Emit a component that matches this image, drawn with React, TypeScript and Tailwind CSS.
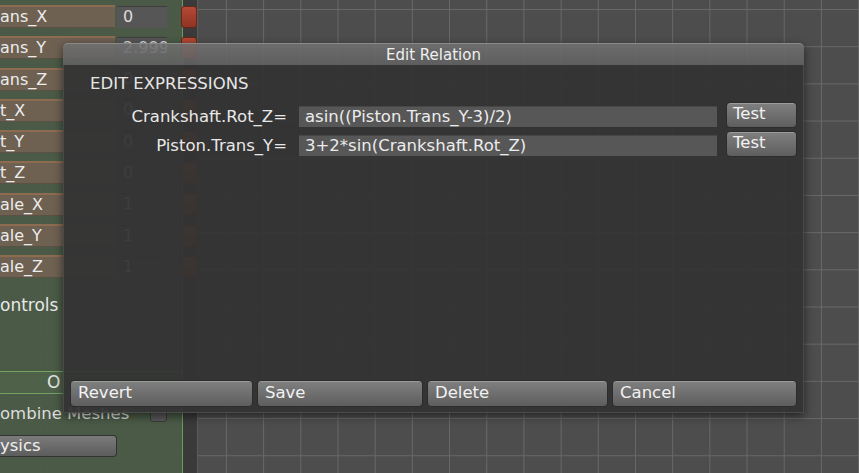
import React from 'react';

const fields = [
  { name: 'ans_X', value: '0' },
  { name: 'ans_Y', value: '2.999' },
  { name: 'ans_Z', value: '0' },
  { name: 't_X', value: '0' },
  { name: 't_Y', value: '0' },
  { name: 't_Z', value: '0' },
  { name: 'ale_X', value: '1' },
  { name: 'ale_Y', value: '1' },
  { name: 'ale_Z', value: '1' },
];

const expressions = [
  { label: 'Crankshaft.Rot_Z=', expr: 'asin((Piston.Trans_Y-3)/2)' },
  { label: 'Piston.Trans_Y=', expr: '3+2*sin(Crankshaft.Rot_Z)' },
];

const btn =
  'rounded-[4px] border border-[#2c2c2c] bg-gradient-to-b from-[#808080] to-[#5e5e5e] shadow-[inset_0_1px_0_rgba(255,255,255,0.22)] text-left text-[#f2f2f2] text-[16.5px]';

const App: React.FC = () => {
  return (
    <div className="relative w-[859px] h-[473px] overflow-hidden flex font-['DejaVu_Sans',sans-serif] bg-[#4d4d4d] bg-[linear-gradient(to_right,#686868_1px,transparent_1px),linear-gradient(to_bottom,#686868_1px,transparent_1px)] bg-[size:37.2px_37.2px] bg-[position:2.8px_9px]">
      {/* inspector panel */}
      <div className="w-[197px] h-full flex flex-col bg-[linear-gradient(to_right,rgba(74,91,70,0.94)_182px,#6a9d5a_182px,#6a9d5a_183px,#3a3a3a_183px)]">
        <div className="pt-[5px] flex flex-col gap-[8.3px]">
          {fields.map((f) => (
            <div key={f.name} className="h-[23px] flex items-center">
              <div className="w-[115px] h-full bg-[#6e6152] border-t-2 border-[#8d6b50] border-b border-b-[#5b5044] text-[16px] leading-[20px] text-[#ececec] overflow-hidden whitespace-nowrap">
                {f.name}
              </div>
              <div className="ml-[2px] w-[50px] h-[22px] bg-[#565656] border-t border-[#3e3e3e] px-[6px] text-[16px] leading-[20px] text-[#dcdcdc] overflow-hidden whitespace-nowrap">
                {f.value}
              </div>
              <div className="ml-[14px] w-[16px] h-[22px] rounded-[3px] bg-gradient-to-b from-[#b34a35] to-[#8f3424] border border-[#6a2418]" />
            </div>
          ))}
        </div>
        <div className="mt-[16px] h-[22px] leading-[22px] text-[17px] text-[#e8e8e8] w-[182px] whitespace-nowrap overflow-hidden">
          ontrols
        </div>
        <div className="mt-[55px] w-[182px] h-[23px] border-y border-[#73a363] bg-[#4f6249] pl-[47px] leading-[21px] text-[17px] text-[#e4e4e4]">
          O
        </div>
        <div className="mt-[9px] w-[182px] h-[22px] flex items-center">
          <span className="text-[16.5px] leading-[22px] text-[#dedede] whitespace-nowrap">ombine Meshes</span>
          <div className="ml-auto mr-[15px] w-[17px] h-[16px] rounded-[3px] bg-[#585858] border border-[#3a3a3a]" />
        </div>
        <div className="mt-[10px] w-[117px] h-[22px] rounded-r-[4px] border border-l-0 border-[#333] bg-gradient-to-b from-[#7b7b7b] to-[#5c5c5c] text-[16.5px] leading-[20px] text-[#f0f0f0]">
          ysics
        </div>
      </div>
      <div className="flex-1 h-full border-l border-[#5c5c5c]" />

      {/* Edit Relation dialog */}
      <div className="absolute left-[63px] top-[43px] w-[741px] h-[370px] flex flex-col rounded-t-[5px] shadow-[0_3px_10px_rgba(0,0,0,0.55)]">
        <div className="h-[22px] rounded-t-[5px] border-t border-[#8a8a8a] bg-gradient-to-b from-[rgba(112,112,112,0.88)] to-[rgba(96,96,96,0.9)] text-center text-[15px] leading-[22px] text-[#f0f0f0]">
          Edit Relation
        </div>
        <div className="flex-1 flex flex-col bg-[rgba(51,51,51,0.94)] border-x border-b border-[#4a4a4a] pt-[9px] pb-[5px]">
          <div className="pl-[26px] h-[20px] leading-[20px] text-[16.5px] text-[#e6e6e6]">EDIT EXPRESSIONS</div>
          <div className="mt-[8px] flex flex-col gap-[3px]">
            {expressions.map((e) => (
              <div key={e.label} className="h-[26px] flex items-start">
                <div className="w-[223px] mt-[4px] h-[21px] leading-[21px] text-right text-[16.5px] text-[#e8e8e8] whitespace-nowrap">
                  {e.label}
                </div>
                <div className="ml-[12px] mt-[4px] w-[418px] h-[21px] bg-[#575757] border-t border-[#474747] pl-[6px] leading-[20px] text-[16.5px] text-[#ececec] whitespace-nowrap overflow-hidden">
                  {e.expr}
                </div>
                <button className={`ml-[9px] w-[71px] h-[26px] pl-[6px] leading-[20px] pb-[3px] ${btn}`}>Test</button>
              </div>
            ))}
          </div>
          <div className="mt-auto flex gap-[4px] pl-[6px]">
            <button className={`w-[183px] h-[27px] pl-[7px] leading-[23px] pb-[2px] ${btn}`}>Revert</button>
            <button className={`w-[166px] h-[27px] pl-[7px] leading-[23px] pb-[2px] ${btn}`}>Save</button>
            <button className={`w-[181px] h-[27px] pl-[7px] leading-[23px] pb-[2px] ${btn}`}>Delete</button>
            <button className={`w-[185px] h-[27px] pl-[7px] leading-[23px] pb-[2px] ${btn}`}>Cancel</button>
          </div>
        </div>
      </div>
    </div>
  );
};

export default App;
